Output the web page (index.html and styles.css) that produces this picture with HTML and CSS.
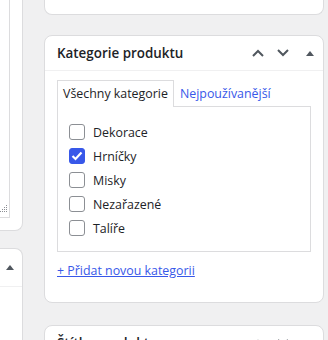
FILE: index.html
```html
<!DOCTYPE html>
<html lang="cs">
<head>
  <meta charset="UTF-8" />
  <title>Kategorie produktu</title>
  <link rel="stylesheet" href="styles.css">
</head>
<body>
  <div class="layout">
    <div class="side">
      <div class="box side-top">
        <div class="textarea">
          <svg class="grip" width="7" height="7" viewBox="0 0 7 7">
            <rect x="6" y="0" width="1" height="1" />
            <rect x="4" y="2" width="1" height="1" /><rect x="6" y="2" width="1" height="1" />
            <rect x="2" y="4" width="1" height="1" /><rect x="4" y="4" width="1" height="1" /><rect x="6" y="4" width="1" height="1" />
            <rect x="0" y="6" width="1" height="1" /><rect x="2" y="6" width="1" height="1" /><rect x="4" y="6" width="1" height="1" /><rect x="6" y="6" width="1" height="1" />
          </svg>
        </div>
      </div>
      <div class="box side-next">
        <div class="box-head side-head">
          <span class="tri"></span>
        </div>
      </div>
    </div>

    <div class="main">
      <div class="box main-top"></div>

      <div class="box postbox">
        <div class="box-head">
          <h2>Kategorie produktu</h2>
          <div class="head-actions">
            <svg class="chev" width="12" height="8" viewBox="0 0 12 8"><path d="M1 7 L6 2 L11 7" /></svg>
            <svg class="chev" width="12" height="8" viewBox="0 0 12 8"><path d="M1 1 L6 6 L11 1" /></svg>
            <span class="tri"></span>
          </div>
        </div>
        <div class="inside">
          <ul class="tabs">
            <li class="tab active">Všechny kategorie</li>
            <li class="tab"><a href="#">Nejpoužívanější</a></li>
          </ul>
          <ul class="checklist">
            <li><label><span class="check"></span>Dekorace</label></li>
            <li><label><span class="check checked"><svg width="12" height="10" viewBox="0 0 12 10"><path d="M1.5 5 L4.5 8 L10.5 1.5" /></svg></span>Hrníčky</label></li>
            <li><label><span class="check"></span>Misky</label></li>
            <li><label><span class="check"></span>Nezařazené</label></li>
            <li><label><span class="check"></span>Talíře</label></li>
          </ul>
          <a class="add-link" href="#">+ Přidat novou kategorii</a>
        </div>
      </div>

      <div class="box postbox postbox-next">
        <div class="box-head">
          <h2>Štítky produktu</h2>
          <div class="head-actions">
            <svg class="chev" width="12" height="8" viewBox="0 0 12 8"><path d="M1 7 L6 2 L11 7" /></svg>
            <svg class="chev" width="12" height="8" viewBox="0 0 12 8"><path d="M1 1 L6 6 L11 1" /></svg>
            <span class="tri"></span>
          </div>
        </div>
      </div>
    </div>
  </div>
</body>
</html>
```

FILE: styles.css
```css
body {
  margin: 0;
  background: #f0f0f1;
  font-family: 'Open Sans', sans-serif;
  font-size: 12.4px;
  color: #1d2327;
  overflow: hidden;
  height: 340px;
}

.layout {
  display: flex;
  gap: 21px;
}

.side {
  width: 23px;
  flex-shrink: 0;
}

.main {
  width: 280px;
  flex-shrink: 0;
}

.box {
  background: #fff;
  border: 1px solid #dcdcde;
  box-sizing: border-box;
}

/* left column */
.side-top {
  height: 231px;
  border-top: none;
  border-left: none;
  border-radius: 0 0 8px 0;
  padding: 0 12px 12px 0;
}

.textarea {
  height: 100%;
  border-right: 1px solid #dcdcde;
  border-bottom: 1px solid #dcdcde;
  box-sizing: border-box;
  position: relative;
}

.grip {
  position: absolute;
  right: 2px;
  bottom: 5px;
  fill: #8c8f94;
}

.side-next {
  margin-top: 17px;
  height: 120px;
  border-left: none;
  border-radius: 0 8px 0 0;
}

.box-head.side-head {
  height: 38px;
  justify-content: flex-end;
  padding: 0 8px 0 0;
}

.side-head .tri {
  margin-left: 0;
}

/* main column */
.main-top {
  height: 15px;
  border-top: none;
  border-radius: 0 0 8px 8px;
}

.postbox {
  margin-top: 20px;
  border-radius: 8px;
}

.postbox-next {
  margin-top: 22px;
}

.box-head {
  display: flex;
  align-items: center;
  justify-content: space-between;
  height: 35px;
  padding: 0 9px 0 12px;
  border-bottom: 1px solid #f0f0f1;
  box-sizing: border-box;
}

.box-head h2 {
  margin: 0;
  font-size: 13.4px;
  font-weight: 600;
}

.head-actions {
  display: flex;
  align-items: center;
  gap: 13px;
}

.chev {
  fill: none;
  stroke: #50575e;
  stroke-width: 2;
}

.tri {
  width: 0;
  height: 0;
  border-left: 4px solid transparent;
  border-right: 4px solid transparent;
  border-bottom: 5px solid #50575e;
  margin-left: 4px;
}

.inside {
  padding: 9px 12px 22px;
}

.tabs {
  list-style: none;
  margin: 0;
  padding: 0;
  display: flex;
}

.tab {
  padding: 4px 5px 5px;
  line-height: 17px;
  border: 1px solid transparent;
  border-bottom: none;
  margin-bottom: -1px;
  position: relative;
}

.tab.active {
  background: #fff;
  border-color: #dcdcde;
}

.tab a {
  color: #3858e9;
  text-decoration: none;
}

.checklist {
  list-style: none;
  margin: 0 0 10px;
  padding: 13px 11px 11px;
  border: 1px solid #dcdcde;
}

.checklist li {
  height: 24px;
  display: flex;
  align-items: center;
}

.checklist label {
  display: flex;
  align-items: center;
  gap: 8px;
}

.check {
  width: 16px;
  height: 16px;
  border: 1px solid #8c8f94;
  border-radius: 3px;
  box-sizing: border-box;
  display: flex;
  align-items: center;
  justify-content: center;
}

.check.checked {
  background: #3858e9;
  border-color: #3858e9;
}

.check svg {
  fill: none;
  stroke: #fff;
  stroke-width: 2.2;
}

.add-link {
  color: #3858e9;
  text-decoration: underline;
  line-height: 18px;
}
```
